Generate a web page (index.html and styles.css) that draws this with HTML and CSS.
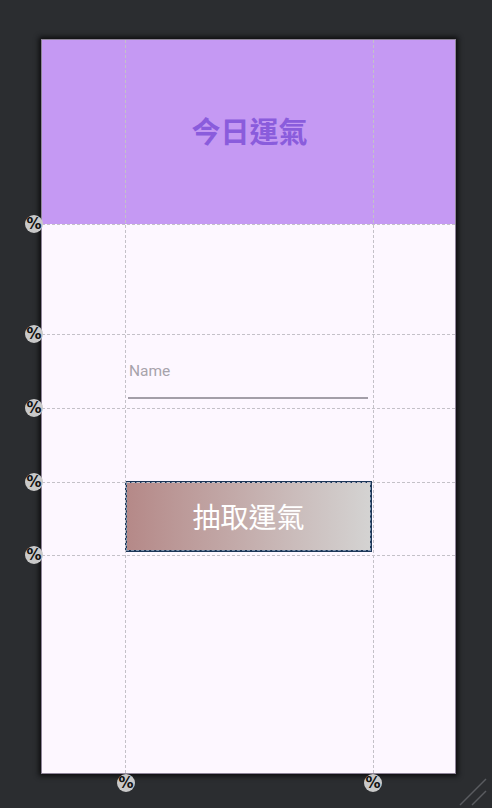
FILE: index.html
```html
<!DOCTYPE html>
<html lang="zh-Hant">
<head>
<meta charset="utf-8">
<link rel="stylesheet" href="styles.css">
</head>
<body>
<div class="canvas">
  <div class="device">
    <div class="screen">
      <header class="header"><h1 class="title">今日運氣</h1></header>
      <div class="content">
        <div class="field-row">
          <div class="field">
            <span class="hint">Name</span>
            <span class="underline"></span>
          </div>
        </div>
        <div class="button-row">
          <button class="draw-btn">抽取運氣</button>
        </div>
      </div>
      <div class="guide v g1"></div>
      <div class="guide v g2"></div>
      <div class="guide h h1"></div>
      <div class="guide h h2"></div>
      <div class="guide h h3"></div>
      <div class="guide h h4"></div>
      <div class="guide h h5"></div>
    </div>
    <span class="badge b-left bl1">%</span>
    <span class="badge b-left bl2">%</span>
    <span class="badge b-left bl3">%</span>
    <span class="badge b-left bl4">%</span>
    <span class="badge b-left bl5">%</span>
    <span class="badge b-bottom bb1">%</span>
    <span class="badge b-bottom bb2">%</span>
  </div>
  <svg class="resize" width="32" height="30" viewBox="0 0 32 30">
    <line x1="2" y1="28" x2="28" y2="2" stroke="#5a5c60" stroke-width="1.5"/>
    <line x1="14" y1="28" x2="28" y2="14" stroke="#5a5c60" stroke-width="1.5"/>
  </svg>
</div>
</body>
</html>
```

FILE: styles.css
```css
html, body {
  margin: 0;
  padding: 0;
  background: #2b2d30;
  width: 492px;
  height: 808px;
  overflow: hidden;
  font-family: "Noto Sans", "Noto Sans CJK TC", sans-serif;
}

.canvas {
  position: relative;
  width: 492px;
  height: 808px;
  padding: 40px 0 0 42px;
  box-sizing: border-box;
}

.device {
  position: relative;
  width: 413px;
  height: 733px;
}

.screen {
  position: relative;
  width: 413px;
  height: 733px;
  background: #fdf7ff;
  display: flex;
  flex-direction: column;
  box-shadow: 0 0 5px 3px #0c0c0d;
  outline: 1px solid #8f8599;
}

.header {
  height: 184px;
  background: #c599f3;
  display: flex;
  align-items: center;
  justify-content: center;
  flex-shrink: 0;
}

.title {
  margin: 0;
  font-family: "Noto Sans CJK TC", sans-serif;
  font-size: 29px;
  font-weight: 700;
  color: #8a5cdc;
  transform: translate(1px, -2px);
}

.content {
  display: flex;
  flex-direction: column;
  padding-top: 138px;
}

.field-row {
  display: flex;
  padding-left: 86px;
}

.field {
  width: 240px;
  display: flex;
  flex-direction: column;
}

.hint {
  font-family: Roboto, "Noto Sans", sans-serif;
  font-size: 15.5px;
  line-height: 18px;
  color: #a7a3ab;
  padding-left: 1px;
}

.underline {
  margin-top: 17px;
  height: 1.5px;
  background: #a39ea8;
}

.button-row {
  display: flex;
  padding-left: 83px;
  margin-top: 82px;
}

.draw-btn {
  width: 247px;
  height: 71px;
  box-sizing: border-box;
  border: 2px solid #1c3658;
  outline: 1px dashed #7f93ad;
  outline-offset: -2px;
  background: linear-gradient(90deg, #b58988 0%, #d4d3d2 100%);
  color: #ffffff;
  font-family: "Noto Sans CJK TC", sans-serif;
  font-size: 28px;
  font-weight: 400;
  padding: 0;
  display: flex;
  align-items: center;
  justify-content: center;
}

/* Layout editor overlays */
.guide {
  position: absolute;
  pointer-events: none;
}
.guide.v {
  top: 0;
  bottom: 0;
  width: 0;
  border-left: 1px dashed #c4c1c8;
}
.guide.h {
  left: 0;
  right: 0;
  height: 0;
  border-top: 1px dashed #c4c1c8;
}
.g1 { left: 83px; }
.g2 { left: 331px; }
.h1 { top: 184px; }
.h2 { top: 294px; }
.h3 { top: 368px; }
.h4 { top: 442px; }
.h5 { top: 515px; }

.badge {
  position: absolute;
  width: 18px;
  height: 18px;
  border-radius: 50%;
  background: #c9c9c9;
  color: #111;
  font-family: "DejaVu Sans", sans-serif;
  font-size: 15px;
  font-weight: 700;
  line-height: 18px;
  text-align: center;
}
.b-left { left: -17px; }
.bl1 { top: 175px; }
.bl2 { top: 285px; }
.bl3 { top: 359px; }
.bl4 { top: 433px; }
.bl5 { top: 506px; }
.b-bottom { top: 734px; }
.bb1 { left: 75px; }
.bb2 { left: 322px; }

.resize {
  position: absolute;
  left: 458px;
  top: 777px;
}
```
